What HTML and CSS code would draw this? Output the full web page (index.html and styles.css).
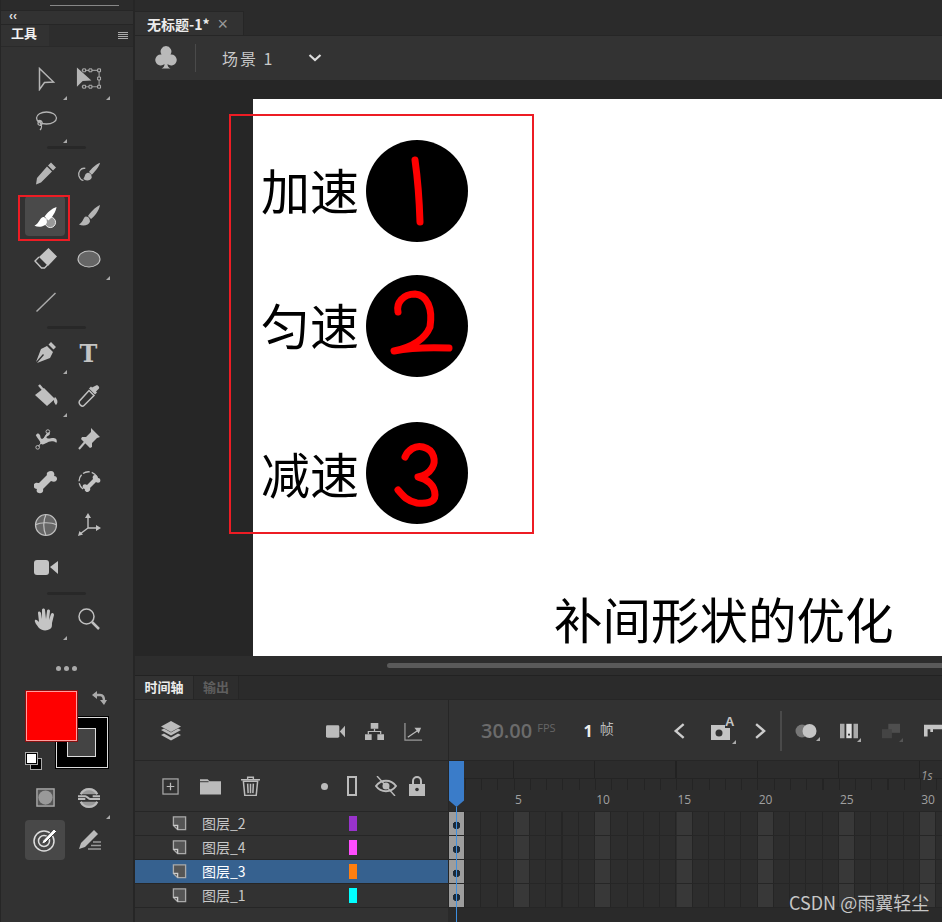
FILE: index.html
```html
<!DOCTYPE html>
<html lang="zh-CN">
<head>
<meta charset="utf-8">
<title>补间形状的优化</title>
<link rel="stylesheet" href="styles.css">
</head>
<body>
<svg class="sprite" xmlns="http://www.w3.org/2000/svg">
  <symbol id="page" viewBox="0 0 16 16"><path d="M1.500 1h13v13.500H6L1.500 10z" fill="#555" stroke="#aaa" stroke-width="1.400"/><path d="M1.500 10H6v4.500" fill="none" stroke="#ccc" stroke-width="1.400"/></symbol>
</svg>
<div class="app">
  <aside class="tools">
    <div class="tools-top"><i class="tools-top-line"></i></div>
    <div class="tools-collapse">‹‹</div>
    <div class="tools-head">
      <span class="tools-title">工具</span>
      <span class="tools-menu"><i></i><i></i><i></i><i></i></span>
    </div>
    <div class="tool-list">
      <div class="tool-row">
        <span class="tool more"><svg viewBox="0 0 24 24"><path d="M5.500 1.500v21l5-7 9-.5z" fill="none" stroke="#b5b5b5" stroke-width="1.500"/></svg></span>
        <span class="tool tool-wide more"><svg viewBox="0 0 28 24"><path d="M2 0v20l6-6 9-.5z" fill="#b5b5b5"/><path d="M7 3h18v17H7" fill="none" stroke="#999" stroke-width="1.200"/><path d="M8 1.500h3v3H8zM14.500 1.500h3v3h-3zM23.500 1.500h3v3h-3zM23.500 10h3v3h-3zM23.500 18.500h3v3h-3zM14.500 18.500h3v3h-3zM8 18.500h3v3H8z" fill="#323232" stroke="#b5b5b5"/></svg></span>
      </div>
      <div class="tool-row">
        <span class="tool more"><svg viewBox="0 0 24 24"><ellipse cx="12.500" cy="8" rx="10" ry="6" fill="none" stroke="#b5b5b5" stroke-width="1.300"/><path d="M7 11c-3 0-4 3-2 4s4-1 3-3-4-2-4 0M6 13c2 2 2 5 0 7" fill="none" stroke="#b5b5b5" stroke-width="1.300"/></svg></span>
        <span class="tool"></span>
      </div>
      <div class="tool-sep"><i></i></div>
      <div class="tool-row">
        <span class="tool"><svg viewBox="0 0 24 24"><path d="M17 1.500l5 5-3 3-5-5zM13 5.500l5 5L7 21.500l-5 2 1-6.500z" fill="#b5b5b5"/></svg></span>
        <span class="tool"><svg viewBox="0 0 26 24"><path d="M25 1c-1 5-7 11-9 13l-3-3c2-3 7-8 12-10z" fill="#b5b5b5"/><path d="M11 12c-3 1-2 4-4 6 1 3 8 3 9-1 0-3-2-6-5-5z" fill="#b5b5b5"/><path d="M9 7C4 6 1 11 2 15c1 3 3 5 5 5" fill="none" stroke="#b5b5b5" stroke-width="1.400"/></svg></span>
      </div>
      <div class="tool-row">
        <span class="tool tool-active"><svg viewBox="0 0 24 24"><circle cx="17" cy="17" r="5.500" fill="#999" stroke="#eee"/><path d="M23.500 1c-.5 5-5 11.500-8.500 14l-4-4c2.500-4 7.500-8.500 12.500-10z" fill="#fff"/><path d="M9.500 11.500c-3.500 .5-3.500 6-9 9 4.500 2.500 12 1 13-3.500 0-3-1.500-5.500-4-5.500z" fill="#fff"/></svg></span>
        <span class="tool"><svg viewBox="0 0 24 24"><path d="M23 1c-1 6-6 12-9 14l-3-3c2-3 7-9 12-11z" fill="#b5b5b5"/><path d="M9 12.500c-3 .5-2 5-7 8 4 2 10 1 11-3 0-2-1-5-4-5z" fill="#b5b5b5"/></svg></span>
      </div>
      <div class="tool-row">
        <span class="tool"><svg viewBox="0 0 24 24"><path d="M14.500 1l8.500 8.500-9 9.500-9-9z" fill="#c4c4c4"/><path d="M5 10l-4 4 6.500 7h3l3-3" fill="none" stroke="#c4c4c4" stroke-width="1.400"/></svg></span>
        <span class="tool more"><svg viewBox="0 0 24 24"><ellipse cx="12" cy="12" rx="11" ry="8" fill="#666" stroke="#c4c4c4" stroke-width="1.100"/></svg></span>
      </div>
      <div class="tool-row">
        <span class="tool"><svg viewBox="0 0 24 24"><path d="M2.500 21.500L21.500 3" stroke="#aaa" stroke-width="1.500"/></svg></span>
        <span class="tool"></span>
      </div>
      <div class="tool-sep"><i></i></div>
      <div class="tool-row">
        <span class="tool more"><svg viewBox="0 0 24 24"><path d="M17 1l5 5-2.500 2.500-5-5zM13 5l6 6-3 6-13 5 7-8-1-1-7 8 5-13z" fill="#c0c0c0"/></svg></span>
        <span class="tool tool-t">T</span>
      </div>
      <div class="tool-row">
        <span class="tool more"><svg viewBox="0 0 24 24"><path d="M1 11l9-7 11 11-8 7z" fill="#c0c0c0"/><path d="M5 1l6 7" stroke="#c0c0c0" stroke-width="2.400"/><path d="M21 13c3 3 3 6 1 8-2-2-3-5-1-8z" fill="#c0c0c0"/></svg></span>
        <span class="tool"><svg viewBox="0 0 24 24"><path d="M19 1.500c1.500-1 4 1.500 3 3l-3 3 1 1-2 2-6-6 2-2 1 1z" fill="#c0c0c0"/><path d="M12 6.500l5 5L7 21.500c-2 2-6-1.500-4.500-4.500z" fill="none" stroke="#c0c0c0" stroke-width="1.500"/></svg></span>
      </div>
      <div class="tool-row">
        <span class="tool"><svg viewBox="0 0 26 24"><path d="M2 8c2-4 5-1 5 2 1 3 3 2 5-1 1-3 6-6 5-2-1 2-5 2-3 4 3 2 6-2 10 1 1 2 1 4 0 4-2-2-6-2-8-1-4 2-7 4-9 2 0-3-3-5-5-9z" fill="#c0c0c0"/><circle cx="4" cy="21" r="2" fill="none" stroke="#c0c0c0"/><circle cx="15" cy="4" r="2" fill="none" stroke="#c0c0c0"/><path d="M5 20L15 5" stroke="#c0c0c0"/></svg></span>
        <span class="tool"><svg viewBox="0 0 24 24"><path d="M14 1l9 9-3 1-5 5 0 4-2 1-9-9 1-2 4 0 5-5z" fill="#c0c0c0"/><path d="M8 15l-6 7" stroke="#c0c0c0" stroke-width="2"/></svg></span>
      </div>
      <div class="tool-row">
        <span class="tool"><svg viewBox="0 0 24 24"><path d="M17 1c3 0 4 3 3 5 3 0 4 3 2 5-1 1-3 1-5 0l-8 8c1 3-2 5-4 4-2 0-3-2-2-4-3 0-4-3-3-5 2-2 4-1 5-1l8-8c-1-2 1-4 4-4z" fill="#c4c4c4"/></svg></span>
        <span class="tool"><svg viewBox="0 0 24 24"><path d="M6 19A9.500 9.500 0 1 1 20 7" fill="none" stroke="#c0c0c0" stroke-width="1.300" stroke-dasharray="7 2"/><path d="M18 5c2 0 3 2 3 3 2 0 3 2 2 4-1 1-3 1-4 0l-6 6c1 2-1 4-3 4-1 0-3-2-2-3-2 0-3-2-2-4 1-1 3-1 4 0l6-6c-1-2 0-4 2-4z" fill="#c4c4c4"/></svg></span>
      </div>
      <div class="tool-row">
        <span class="tool"><svg viewBox="0 0 24 24"><circle cx="12" cy="12" r="10.500" fill="#666" stroke="#c0c0c0" stroke-width="1.200"/><path d="M1.500 12c5-3 16-3 21 0M12 1.500c-3 6-3 15 0 21" fill="none" stroke="#c0c0c0" stroke-width="1.200"/></svg></span>
        <span class="tool"><svg viewBox="0 0 24 24"><path d="M11 15V4M11 15l10 0M11 15l-8 6" stroke="#c0c0c0" stroke-width="1.400"/><path d="M11 0l3 5H8zM24 15l-5 3v-6zM1 23l1.500-5 3.500 3.500z" fill="#c0c0c0"/></svg></span>
      </div>
      <div class="tool-row tool-row-cam">
        <span class="tool"><svg viewBox="0 0 24 24"><rect y="4" width="15" height="15" rx="3" fill="#c4c4c4"/><path d="M16 11l8-6v13z" fill="#c4c4c4"/></svg></span>
        <span class="tool"></span>
      </div>
      <div class="tool-sep"><i></i></div>
      <div class="tool-row">
        <span class="tool more"><svg viewBox="0 0 24 24"><path d="M5 21c-2-3-5-6-4-8 1-1 3 1 4 2l-1-9c0-2 2-2 3 0l1 6-0-9c0-2 3-2 3 0l1 9 1-8c0-2 3-2 3 0l-1 9 2-6c1-2 3-1 3 1l-2 8c0 3 0 5-2 6-3 2-8 2-11-1z" fill="#c4c4c4"/></svg></span>
        <span class="tool"><svg viewBox="0 0 24 24"><circle cx="9.500" cy="9.500" r="7.500" fill="none" stroke="#c0c0c0" stroke-width="1.500"/><path d="M15 15l7 7" stroke="#c0c0c0" stroke-width="2.500"/></svg></span>
      </div>
    </div>
    <div class="tool-dots"><i></i><i></i><i></i></div>
    <div class="colors">
      <div class="swatch-stroke"><i></i></div>
      <div class="swatch-fill"></div>
      <svg class="swap" viewBox="0 0 16 16"><path d="M3 5h6c3 0 4 2 4 6" fill="none" stroke="#aaa" stroke-width="2.400"/><path d="M6 1L1 5l5 4zM9 10l4 5 3-5z" fill="#aaa"/></svg>
      <div class="default-back"></div>
      <div class="default-front"></div>
    </div>
    <div class="tool-row option-row">
      <span class="tool"><svg viewBox="0 0 20 20"><rect x="1" y="1" width="18" height="18" fill="#555" stroke="#aaa" stroke-width="1.500"/><circle cx="10" cy="10" r="7.500" fill="#999"/></svg></span>
      <span class="tool more"><svg viewBox="0 0 24 24"><path d="M3 8a10 10 0 0 1 18 0M3 16a10 10 0 0 0 18 0" fill="#999" stroke="#bbb" stroke-width="2.500"/><path d="M0 10h8c2 0 3 3 5 3h11M0 13h8M16 10h8" fill="none" stroke="#bbb" stroke-width="2.200"/></svg></span>
    </div>
    <div class="tool-row">
      <span class="tool tool-on"><svg viewBox="0 0 24 24"><circle cx="11" cy="13" r="10" fill="none" stroke="#ddd" stroke-width="1.500"/><circle cx="11" cy="13" r="5.500" fill="none" stroke="#ddd" stroke-width="1.500"/><path d="M21 1l2.500 2.500L12 15l-3.500 1L10 12.500z" fill="#fff" stroke="#444"/></svg></span>
      <span class="tool"><svg viewBox="0 0 24 24"><path d="M16 1l4 4L7 18l-6 2 2-6z" fill="#bbb"/><path d="M10 20h13M13 16.500h10M15 13h8" stroke="#999" stroke-width="1.300"/></svg></span>
    </div>
  </aside>

  <main class="main">
    <div class="doc-tabs"><div class="doc-tab"><b>无标题-1*</b><span class="doc-close">×</span></div></div>
    <div class="scene-bar">
      <span class="scene-icon"><svg viewBox="0 0 22 24"><path d="M11 0a5.500 5.500 0 0 1 4.500 8.500A5.500 5.500 0 1 1 12.500 18c0 2 1 3.500 3 4.500h-9c2-1 3-2.500 3-4.500a5.500 5.500 0 1 1-3-9.500A5.500 5.500 0 0 1 11 0z" fill="#b9b9b9"/></svg></span>
      <span class="scene-name">场景 1</span>
      <svg class="scene-chev" viewBox="0 0 14 10"><path d="M1.500 2l5.500 5 5.500-5" fill="none" stroke="#ddd" stroke-width="2.200"/></svg>
    </div>
    <div class="stage">
      <div class="artboard">
        <div class="speed s1"><span class="speed-text">加速</span><svg class="disc" viewBox="0 0 102 102"><circle cx="51" cy="51" r="51"/><path d="M49 20c2 14 4 30 5 62"/></svg></div>
        <div class="speed s2"><span class="speed-text">匀速</span><svg class="disc" viewBox="0 0 102 102"><circle cx="51" cy="51" r="51"/><path d="M32 37c-2-9 5-18 17-18 12 1 18 14 15 33-5 12-18 20-36 24 15-3 30-4 55-3"/></svg></div>
        <div class="speed s3"><span class="speed-text">减速</span><svg class="disc" viewBox="0 0 102 102"><circle cx="51" cy="51" r="51"/><path d="M39 35c3-7 10-12 18-10 12 3 13 15 9 21-3 5-9 8-14 9 9 2 17 8 17 18 0 8-10 9-18 8-10-2-14-7-19-13"/></svg></div>
        <div class="art-title">补间形状的优化</div>
      </div>
      <div class="select-box"></div>
    </div>
    <div class="stage-scroll"><i></i></div>

    <section class="timeline">
      <div class="tl-tabs"><span class="tl-tab tl-tab-on">时间轴</span><span class="tl-tab">输出</span></div>
      <div class="tl-grid">
        <div class="tl-tools-left">
          <svg class="ic ic-layers" viewBox="0 0 20 20"><path d="M10 0l10 5.500-10 5.500L0 5.500z" fill="#bbb"/><path d="M0 9l3-1.500 7 4 7-4 3 1.500-10 5.500z" fill="#bbb"/><path d="M0 14l3-1.500 7 4 7-4 3 1.500-10 5.500z" fill="#bbb"/></svg>
          <span class="tl-spacer"></span>
          <svg class="ic" viewBox="0 0 20 14"><rect width="14" height="13" y="0.500" rx="1.500" fill="#bbb"/><path d="M14.500 7L20 1v12z" fill="#bbb"/></svg>
          <svg class="ic" viewBox="0 0 20 18"><path d="M6 0h8v6H6zM0 12h7v6H0zM13 12h7v6h-7z" fill="#bbb"/><path d="M10 6v3M3.500 12V9h13v3" fill="none" stroke="#bbb" stroke-width="1.300"/></svg>
          <svg class="ic" viewBox="0 0 20 20"><path d="M1 1v18h18" fill="none" stroke="#999" stroke-width="1.300"/><path d="M4 16L16 8" stroke="#bbb" stroke-width="1.300"/><path d="M18 6l-7 0 4.500 6z" fill="#bbb"/></svg>
        </div>
        <div class="tl-tools-right">
          <span class="fps-value">30.00</span><span class="fps-unit">FPS</span>
          <span class="frame-no">1</span><span class="frame-unit">帧</span>
          <svg class="nav" viewBox="0 0 12 16"><path d="M10 1.500L2.500 8l7.500 6.500" fill="none" stroke="#ccc" stroke-width="2.200"/></svg>
          <span class="cam-a mini"><svg viewBox="0 0 22 22"><path d="M1 6h14v3h5v12H1z" fill="#c4c4c4"/><circle cx="9" cy="14" r="3.500" fill="#323232"/></svg><b class="cam-letter">A</b></span>
          <svg class="nav" viewBox="0 0 12 16"><path d="M2 1.500L9.500 8 2 14.500" fill="none" stroke="#ccc" stroke-width="2.200"/></svg>
          <i class="tl-vsep"></i>
          <span class="mini onion"><svg viewBox="0 0 22 14"><circle cx="7" cy="7" r="6.500" fill="#777"/><circle cx="14.500" cy="7" r="7" fill="#c4c4c4"/></svg></span>
          <span class="mini onion2"><svg viewBox="0 0 20 16"><path d="M0 0h5v16H0zM15 0h5v16h-5z" fill="#aaa"/><path d="M7 0h6v16H7z" fill="#ddd"/><rect x="9" y="11" width="2" height="2" fill="#222"/></svg></span>
          <span class="mini onion3"><svg viewBox="0 0 20 16"><path d="M7 0h13v10H7z" fill="#4e4e4e"/><path d="M0 6h11v10H0z" fill="#444"/></svg></span>
          <span class="mini onion4"><svg viewBox="0 0 20 16"><path d="M0 1h20v5H10v3H7V6H4v8H0z" fill="#c4c4c4"/></svg></span>
        </div>

        <div class="tl-head-left">
          <svg class="ic ic-add" viewBox="0 0 18 18"><rect x="1" y="1" width="16" height="16" fill="none" stroke="#aaa" stroke-width="1.300"/><path d="M9 5v8M5 9h8" stroke="#bbb" stroke-width="1.300"/></svg>
          <svg class="ic ic-folder" viewBox="0 0 22 17"><path d="M0 1h8l2 2h12v14H0z" fill="#bbb"/><path d="M0 3.500h9" stroke="#323232"/></svg>
          <svg class="ic ic-trash" viewBox="0 0 20 20"><path d="M0 3.500h20M7 3V.7h6V3" fill="none" stroke="#bbb" stroke-width="1.500"/><path d="M2.500 5l1.500 15h12l1.500-15zM7 7.500l.5 10M10 7.500v10M13 7.500l-.5 10" fill="none" stroke="#bbb" stroke-width="1.600"/></svg>
          <i class="head-dot"></i>
          <i class="head-frame"></i>
          <svg class="ic ic-eye" viewBox="0 0 22 20"><path d="M1 10c5-7 15-7 20 0-5 7-15 7-20 0z" fill="none" stroke="#bbb" stroke-width="2"/><circle cx="11" cy="10" r="3.500" fill="#bbb"/><path d="M2 0l18 20" stroke="#bbb" stroke-width="1.400"/></svg>
          <svg class="ic ic-lock" viewBox="0 0 16 20"><path d="M4 9V5a4 4 0 0 1 8 0v4" fill="none" stroke="#bbb" stroke-width="2"/><path d="M0 8h16v12H0z" fill="#bbb"/><circle cx="8" cy="13.500" r="1.800" fill="#323232"/></svg>
        </div>
        <div class="ruler">
          <div class="ruler-top"><span class="ruler-1s">1s</span></div>
          <div class="ruler-ticks"></div>
          <div class="ruler-nums"><span>5</span><span>10</span><span>15</span><span>20</span><span>25</span><span>30</span></div>
        </div>

        <div class="layers">
          <div class="layer"><svg class="layer-page"><use href="#page"/></svg><span class="layer-name">图层_2</span><i class="chip chip-purple"></i></div>
          <div class="layer"><svg class="layer-page"><use href="#page"/></svg><span class="layer-name">图层_4</span><i class="chip chip-pink"></i></div>
          <div class="layer layer-on"><svg class="layer-page"><use href="#page"/></svg><span class="layer-name">图层_3</span><i class="chip chip-orange"></i></div>
          <div class="layer"><svg class="layer-page"><use href="#page"/></svg><span class="layer-name">图层_1</span><i class="chip chip-cyan"></i></div>
        </div>
        <div class="frames">
          <div class="frame-row"><i class="key"></i></div>
          <div class="frame-row"><i class="key"></i></div>
          <div class="frame-row"><i class="key"></i></div>
          <div class="frame-row"><i class="key"></i></div>
          <div class="playhead"></div>
        </div>
      </div>
      <div class="watermark">CSDN @雨翼轻尘</div>
    </section>
  </main>
</div>
</body>
</html>
```

FILE: styles.css
```css
*, *::before, *::after { box-sizing: border-box; }
html, body { margin: 0; height: 922px; overflow: hidden; background: #262626; }
body { font-family: "Noto Sans CJK SC", "Liberation Sans", sans-serif; color: #ccc; position: relative; }
.sprite { display: none; }
i { display: block; }
svg { display: block; }

.app { display: grid; grid-template-columns: 133px 1fr; column-gap: 2px; width: 942px; height: 922px; overflow: hidden; }

/* left tool panel */
.tools { background: #323232; border-left: 1px solid #262626; display: flex; flex-direction: column; height: 922px; position: relative; }
.tools-top { height: 10px; background: #2b2b2b; position: relative; }
.tools-top-line { position: absolute; left: 49px; top: 5px; width: 69px; height: 1px; background: #888; }
.tools-collapse { height: 15px; background: #323232; border-top: 1px solid #262626; border-bottom: 1px solid #262626; font: bold 12px/11px "Liberation Sans", sans-serif; padding-left: 8px; color: #ddd; }
.tools-head { height: 22px; display: flex; position: relative; background: #2d2d2d; border-bottom: 1px solid #2a2a2a; }
.tools-title { width: 48px; background: #323232; font-size: 13px; line-height: 16px; font-weight: 700; color: #f2f2f2; padding-left: 10px; }
.tools-menu { margin-left: auto; width: 24px; display: flex; flex-direction: column; gap: 1px; padding: 7px 3px 0 9px; }
.tools-menu i { height: 1px; width: 10px; background: #aaa; }
.tool-list { padding-top: 10px; display: flex; flex-direction: column; }
.tool-row { height: 43px; display: flex; padding-left: 23px; }
.tool { width: 43px; height: 43px; display: flex; align-items: center; justify-content: center; position: relative; flex: none; }
.tool svg { width: 24px; height: 24px; }
.tool-wide svg { width: 27px; height: 24px; }
.more::after { content: ""; position: absolute; right: 0; bottom: 0; border: 2px solid transparent; border-right-color: #aaa; border-bottom-color: #aaa; width: 4px; height: 4px; }
.tool-sep { height: 8px; display: flex; align-items: center; padding-left: 46px; }
.tool-sep i { width: 39px; height: 3px; background: #262626; border-radius: 2px; opacity: .8; }
.tool-active::before { content: ""; position: absolute; left: 1px; top: 2px; width: 40px; height: 40px; border-radius: 4px; background: #4a4a4a; }
.tool-active::after { content: ""; position: absolute; left: -6px; top: 1px; width: 52px; height: 46px; border: 2px solid #ed1c24; }
.tool-active svg { position: relative; width: 23px; height: 23px; margin-top: 3px; }
.tool-t { font: bold 24px/1 "DejaVu Serif", serif; color: #c4c4c4; padding-top: 2px; }
.tool-dots { height: 27px; margin-top: 15px; display: flex; justify-content: center; align-items: center; gap: 3px; padding-right: 1px; }
.tool-dots i { width: 5px; height: 5px; border-radius: 50%; background: #aaa; }
.colors { position: relative; height: 90px; margin-top: 4px; flex: none; }
.swatch-fill { position: absolute; left: 24px; top: 4px; width: 53px; height: 52px; background: #f00; border: 1px solid #8a1010; box-shadow: inset 0 0 0 1px #ff9d9d; }
.swatch-stroke { position: absolute; left: 54px; top: 30px; width: 54px; height: 53px; background: #000; border: 1px solid #000; box-shadow: inset 0 0 0 1px #ddd; padding: 11px; }
.swatch-stroke i { width: 29px; height: 29px; background: #444; border: 1px solid #ddd; }
.swap { position: absolute; left: 90px; top: 4px; width: 16px; height: 16px; }
.default-back { position: absolute; left: 29px; top: 72px; width: 12px; height: 12px; background: #000; border: 1px solid #aaa; }
.default-front { position: absolute; left: 25px; top: 67px; width: 11px; height: 11px; background: #fff; border: 1px solid #000; outline: 1px solid #aaa; }
.option-row .tool svg { width: 19px; height: 19px; }
.option-row .tool:last-child svg { width: 22px; height: 22px; }
.tool-on { background: #484848; width: 40px; height: 40px; border-radius: 4px; margin: 1px 3px 0 1px; }

/* main */
.main { display: flex; flex-direction: column; min-width: 0; height: 922px; }
.doc-tabs { height: 36px; padding-top: 11px; background: #2b2b2b; border-bottom: 1px solid #262626; }
.doc-tab { width: 109px; height: 24px; background: #323232; border-right: 1px solid #262626; border-top: 1px solid #262626; display: flex; align-items: center; padding-left: 12px; font-size: 14px; color: #ececec; }
.doc-tab b { font-weight: 700; }
.doc-close { margin-left: 8px; font: 300 18px/1 "Liberation Sans", sans-serif; color: #999; }
.scene-bar { height: 44px; background: #333; display: flex; align-items: center; padding-left: 20px; }
.scene-icon { width: 41px; height: 28px; border-right: 1px solid #4a4a4a; padding-top: 2px; }
.scene-icon svg { width: 22px; height: 24px; }
.scene-name { margin-left: 26px; font-size: 16px; letter-spacing: 2px; color: #c9c9c9; }
.scene-chev { width: 14px; height: 10px; margin-left: 34px; }

.stage { height: 576px; position: relative; background: #262626; padding: 19px 0 0 118px; overflow: hidden; flex: none; }
.artboard { width: 700px; height: 557px; background: #fff; position: relative; color: #000; }
.speed { position: absolute; left: 8px; display: flex; align-items: center; gap: 8px; }
.s1 { top: 41px; }
.s2 { top: 176px; }
.s3 { top: 323px; }
.speed-text { font-size: 49px; line-height: 96px; width: 97px; white-space: nowrap; margin-top: -4px; }
.s3 .speed-text { margin-top: 0; }
.disc { width: 102px; height: 102px; }
.disc circle { fill: #000; }
.disc path { fill: none; stroke: #f00; stroke-width: 7; stroke-linecap: round; stroke-linejoin: round; }
.art-title { position: absolute; left: 301px; top: 486px; font-size: 48.500px; line-height: 66px; white-space: nowrap; }
.select-box { position: absolute; left: 94px; top: 34px; width: 305px; height: 420px; border: 2px solid #ed1c24; }
.stage-scroll { height: 20px; background: #2d2d2d; padding: 7px 0 0 252px; flex: none; border-bottom: 1px solid #222; }
.stage-scroll i { height: 5px; background: #5a5a5a; border-radius: 3px; width: 600px; }

/* timeline */
.timeline { position: relative; background: #2a2a2a; flex: 1; min-height: 0; overflow: hidden; }
.tl-tabs { height: 24px; display: flex; background: #2b2b2b; border-bottom: 1px solid #262626; }
.tl-tab { width: 45px; font-size: 13px; line-height: 22px; font-weight: 700; color: #5f5f5f; text-align: center; border-right: 1px solid #262626; background: #2d2d2d; }
.tl-tab-on { width: 59px; color: #ededed; background: #323232; }
.tl-grid { display: grid; grid-template-columns: 313px 1fr; grid-template-rows: 61px 51px 96px; column-gap: 1px; background: #262626; }
.tl-tools-left { background: #323232; display: flex; align-items: center; padding: 2px 25px 0 26px; border-bottom: 1px solid #262626; }
.ic { flex: none; }
.tl-tools-left .ic { width: 19px; height: 19px; margin-left: 20px; }
.tl-tools-left .ic-layers { width: 20px; height: 20px; margin-left: 0; }
.tl-spacer { flex: 1; margin-right: -1px; }
.tl-tools-right { background: #323232; display: flex; align-items: center; overflow: hidden; position: relative; border-bottom: 1px solid #262626; padding-top: 2px; }
.fps-value { margin-left: 32px; font: 600 20px/1 "Open Sans", sans-serif; color: #6b6b6b; }
.fps-unit { margin: -8px 0 0 5px; font: 11px/1 "Open Sans", sans-serif; color: #666; }
.frame-no { margin-left: 28px; font: 700 16px/1 "Open Sans", sans-serif; color: #eee; }
.frame-unit { margin: -7px 0 0 7px; font-size: 14px; line-height: 1; color: #bbb; }
.nav { width: 15px; height: 20px; margin-left: 59px; }
.cam-a { margin-left: 23px; width: 24px; height: 22px; margin-top: -2px; }
.cam-a + .nav { margin-left: 21px; }
.cam-letter { position: absolute; right: -2px; top: -4px; font: 700 13px/13px "Liberation Sans", sans-serif; color: #c4c4c4; }
.tl-vsep { width: 2px; height: 40px; background: #4a4a4a; margin-left: 14px; }
.mini { position: relative; flex: none; }
.mini svg { width: 100%; height: 100%; }
.mini::after { content: ""; position: absolute; right: -3px; bottom: -3px; border: 2px solid transparent; border-right-color: #aaa; border-bottom-color: #aaa; width: 4px; height: 4px; }
.onion { width: 22px; height: 14px; margin-left: 13px; }
.onion2 { width: 18px; height: 16px; margin-left: 23px; }
.onion3 { width: 18px; height: 16px; margin-left: 24px; }
.onion3::after { border-right-color: #555; border-bottom-color: #555; }
.onion4 { width: 18px; height: 16px; margin-left: 24px; }
.onion4::after { display: none; }

.tl-head-left { background: #323232; display: flex; align-items: center; padding-left: 27px; border-bottom: 1px solid #262626; position: relative; }
.ic-add { width: 17px; height: 17px; }
.ic-folder { width: 21px; height: 17px; margin-left: 21px; }
.ic-trash { width: 19px; height: 20px; margin-left: 20px; }
.head-dot { width: 7px; height: 7px; border-radius: 50%; background: #bbb; margin-left: 61px; }
.head-frame { width: 10px; height: 20px; border: 2px solid #bbb; margin-left: 19px; }
.ic-eye { width: 22px; height: 20px; margin-left: 18px; }
.ic-lock { width: 16px; height: 20px; margin-left: 12px; }

.ruler { background: #2c2c2c; border-bottom: 1px solid #262626; position: relative; overflow: hidden; }
.ruler-top { height: 18px; padding-left: 472px; background: repeating-linear-gradient(90deg, transparent 0 64px, #222 64px 65px, transparent 65px 81.250px); border-bottom: 1px solid #242424; }
.ruler-1s { font: italic 12px/26px "Open Sans", sans-serif; color: #999; }
.ruler-ticks { height: 11px; margin-left: 16px; background: repeating-linear-gradient(90deg, #242424 0 1px, transparent 1px 16.250px); }
.ruler-nums { display: flex; padding-left: 65px; height: 20px; font: 12px/20px "Open Sans", sans-serif; color: #a0a0a0; }
.ruler-nums span { width: 81.250px; flex: none; padding-left: 1px; }

.layers { background: #323232; height: 111px; }
.layer { height: 24px; display: flex; align-items: center; padding-left: 37px; border-bottom: 1px solid #262626; font-size: 14px; color: #c8c8c8; }
.layer-on { background: #36618f; color: #fff; }
.layer-page { width: 15px; height: 15px; }
.layer-name { width: 147px; margin-left: 15px; line-height: 24px; margin-top: -2px; }
.chip { width: 8px; height: 15px; }
.chip-purple { background: #9933cc; }
.chip-pink { background: #ff4dff; }
.chip-orange { background: #ff7f0f; }
.chip-cyan { background: #00ffff; }

.frames { position: relative; height: 111px; background: #2a2a2a; }
.frame-row { height: 24px; border-bottom: 1px solid #262626; background:
  repeating-linear-gradient(90deg, transparent 0 65px, #383838 65px 80px, transparent 80px 81.250px),
  repeating-linear-gradient(90deg, #2d2d2d 0 15px, #252525 15px 16.250px); }
.key { width: 15px; height: 23px; background: radial-gradient(circle 4px at 50% 58%, #1d2a38 0 90%, #9d9d9d 100%); }
.playhead { position: absolute; left: 7px; top: -5px; width: 1px; height: 120px; background: #3d8fe0; }
.playhead::before { content: ""; position: absolute; left: -7px; top: -46px; width: 15px; height: 46px; background: #3a7cc9; clip-path: polygon(0 0, 100% 0, 100% 86%, 50% 100%, 0 86%); }

.watermark { position: absolute; left: 654px; top: 214px; font-size: 18px; line-height: 24px; color: #c6c6c6; white-space: nowrap; }
```
